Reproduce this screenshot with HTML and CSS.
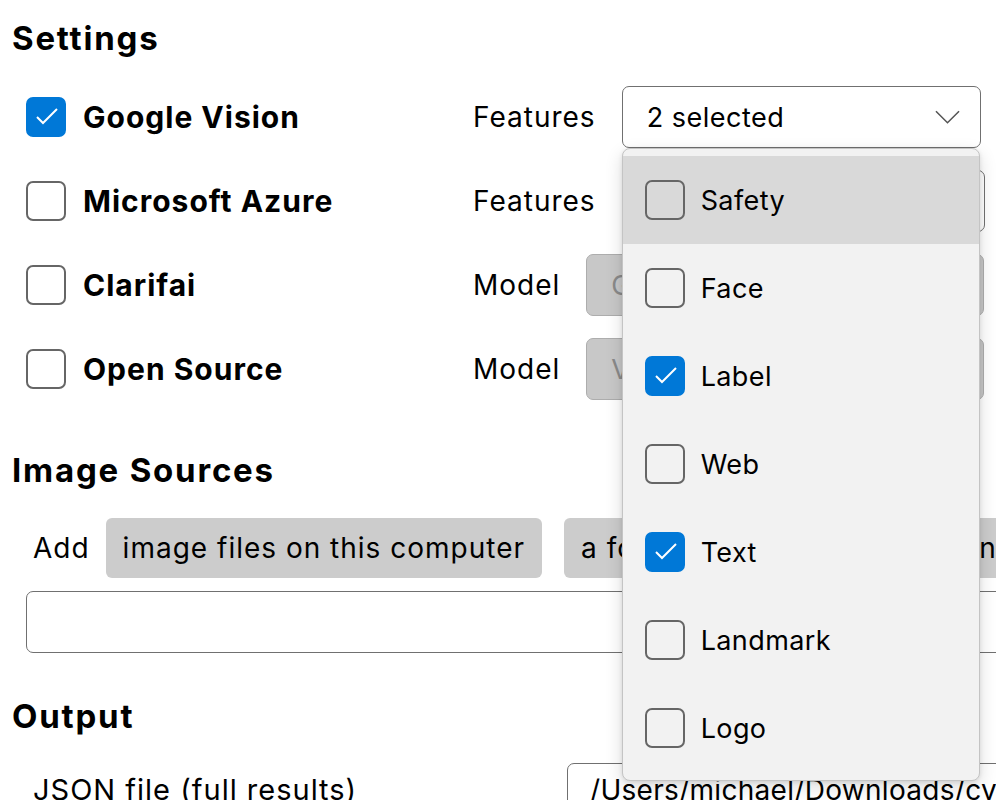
FILE: index.html
```html
<!DOCTYPE html>
<html lang="en">
<head>
<meta charset="utf-8">
<title>Settings</title>
<link rel="stylesheet" href="styles.css">
</head>
<body>
<main class="page">
  <h2 class="section-title">Settings</h2>
  <div class="engines">
    <div class="engine-row">
      <label class="engine">
        <span class="cb checked"><svg viewBox="0 0 40 40"><path d="M11 20 L17 26 L31 12" /></svg></span>
        <span class="engine-name">Google Vision</span>
      </label>
      <span class="field-label">Features</span>
      <div class="select-wrap">
        <div class="select open">
          <span>2 selected</span>
          <svg class="chevron" viewBox="0 0 26 14"><path d="M1 1 L13 13 L25 1" /></svg>
        </div>
        <ul class="dropdown">
          <li class="option hover"><span class="cb"></span><span>Safety</span></li>
          <li class="option"><span class="cb"></span><span>Face</span></li>
          <li class="option"><span class="cb checked"><svg viewBox="0 0 40 40"><path d="M11 20 L17 26 L31 12" /></svg></span><span>Label</span></li>
          <li class="option"><span class="cb"></span><span>Web</span></li>
          <li class="option"><span class="cb checked"><svg viewBox="0 0 40 40"><path d="M11 20 L17 26 L31 12" /></svg></span><span>Text</span></li>
          <li class="option"><span class="cb"></span><span>Landmark</span></li>
          <li class="option"><span class="cb"></span><span>Logo</span></li>
        </ul>
      </div>
    </div>
    <div class="engine-row">
      <label class="engine">
        <span class="cb"></span>
        <span class="engine-name">Microsoft Azure</span>
      </label>
      <span class="field-label">Features</span>
      <div class="select azure">
        <span>Select</span>
        <svg class="chevron" viewBox="0 0 26 14"><path d="M1 1 L13 13 L25 1" /></svg>
      </div>
    </div>
    <div class="engine-row">
      <label class="engine">
        <span class="cb"></span>
        <span class="engine-name">Clarifai</span>
      </label>
      <span class="field-label">Model</span>
      <div class="select model disabled">
        <span>General</span>
        <svg class="chevron" viewBox="0 0 26 14"><path d="M1 1 L13 13 L25 1" /></svg>
      </div>
    </div>
    <div class="engine-row">
      <label class="engine">
        <span class="cb"></span>
        <span class="engine-name">Open Source</span>
      </label>
      <span class="field-label">Model</span>
      <div class="select model disabled">
        <span>VGG16</span>
        <svg class="chevron" viewBox="0 0 26 14"><path d="M1 1 L13 13 L25 1" /></svg>
      </div>
    </div>
  </div>

  <h2 class="section-title sources-title">Image Sources</h2>
  <div class="add-row">
    <span class="add-label">Add</span>
    <button class="btn">image files on this computer</button>
    <button class="btn">a folder and its subfolders on this computer</button>
  </div>
  <div class="text-input"></div>

  <h2 class="section-title output-title">Output</h2>
  <div class="output-row">
    <span class="output-label">JSON file (full results)</span>
    <div class="text-input path">/Users/michael/Downloads/cy-results.json</div>
  </div>
</main>
</body>
</html>
```
FILE: styles.css
```css
html, body {
  margin: 0;
  padding: 0;
  background: #ffffff;
  overflow: hidden;
}

body {
  font-family: Inter, "Noto Sans", sans-serif;
  color: #000000;
  width: 996px;
  height: 800px;
}

.page {
  padding: 0 0 0 12px;
  width: 1100px;
}

.section-title {
  margin: 18px 0 0 0;
  font-size: 33px;
  line-height: 40px;
  font-weight: 700;
  letter-spacing: 1.8px;
}

.engines {
  margin-top: 17px;
  padding-left: 14px;
}

.engine-row {
  display: flex;
  align-items: center;
  height: 84px;
}

.engine {
  display: flex;
  align-items: center;
  gap: 17px;
  width: 447px;
  flex: none;
}

.engine-name {
  font-size: 30px;
  font-weight: 700;
  letter-spacing: 1px;
}

.cb {
  width: 40px;
  height: 40px;
  box-sizing: border-box;
  border: 2px solid #666666;
  border-radius: 7px;
  background: #ffffff;
  flex: none;
  display: flex;
}

.cb svg {
  width: 40px;
  height: 40px;
  margin: -2px;
}

.cb svg path {
  fill: none;
  stroke: #ffffff;
  stroke-width: 2;
}

.cb.checked {
  background: #0078d7;
  border-color: #0078d7;
}

.field-label {
  font-size: 28px;
  letter-spacing: 1px;
  margin-right: 26px;
}

.select-wrap {
  position: relative;
}

.select {
  width: 359px;
  height: 62px;
  box-sizing: border-box;
  border: 1.5px solid #707070;
  border-radius: 7px;
  background: #ffffff;
  display: flex;
  align-items: center;
  justify-content: space-between;
  padding: 0 20px 0 24px;
  font-size: 27px;
  letter-spacing: 0.5px;
}

.select.azure {
  width: 363px;
}

.select.model {
  width: 398px;
}

.select.disabled {
  background: #c8c8c8;
  border-color: #adadad;
  color: #8a8a8a;
}

.chevron {
  width: 25px;
  height: 14px;
}

.chevron path {
  fill: none;
  stroke: #555555;
  stroke-width: 1.6;
}

.dropdown {
  position: absolute;
  left: 0;
  top: 62px;
  width: 358px;
  margin: 0;
  padding: 7px 0 8px;
  list-style: none;
  background: #f2f2f2;
  border: 1px solid #c4c4c4;
  border-radius: 8px;
  box-sizing: border-box;
  box-shadow: 0 6px 18px rgba(0, 0, 0, 0.14), 0 1px 4px rgba(0, 0, 0, 0.1);
  z-index: 10;
}

.option {
  height: 88px;
  display: flex;
  align-items: center;
  gap: 16px;
  padding-left: 22px;
  font-size: 27px;
  letter-spacing: 0.4px;
}

.option.hover {
  background: #d9d9d9;
}

.option .cb {
  background: transparent;
}

.option .cb.checked {
  background: #0078d7;
}

.sources-title {
  margin-top: 39px;
}

.add-row {
  margin-top: 28px;
  display: flex;
  align-items: center;
  padding-left: 21px;
  white-space: nowrap;
}

.add-label {
  font-size: 28px;
  letter-spacing: 1px;
  margin-right: 16px;
}

.btn {
  font-family: inherit;
  font-size: 28px;
  letter-spacing: 1px;
  color: #000000;
  background: #cccccc;
  border: none;
  border-radius: 6px;
  height: 60px;
  padding: 0 17px;
  margin-right: 22px;
  white-space: nowrap;
  flex: none;
}

.text-input {
  margin: 13px 0 0 14px;
  height: 62px;
  width: 1000px;
  box-sizing: border-box;
  border: 1.5px solid #707070;
  border-radius: 7px;
  background: #ffffff;
}

.output-title {
  margin-top: 43px;
}

.output-row {
  margin-top: 27px;
  display: flex;
  align-items: flex-start;
  padding-left: 21px;
}

.output-label {
  font-size: 29px;
  letter-spacing: 1px;
  width: 534px;
  flex: none;
  padding-top: 9px;
}

.text-input.path {
  margin: 0;
  width: 500px;
  font-size: 28px;
  letter-spacing: 0.3px;
  padding: 9px 0 0 22px;
  overflow: hidden;
  white-space: nowrap;
}
```
